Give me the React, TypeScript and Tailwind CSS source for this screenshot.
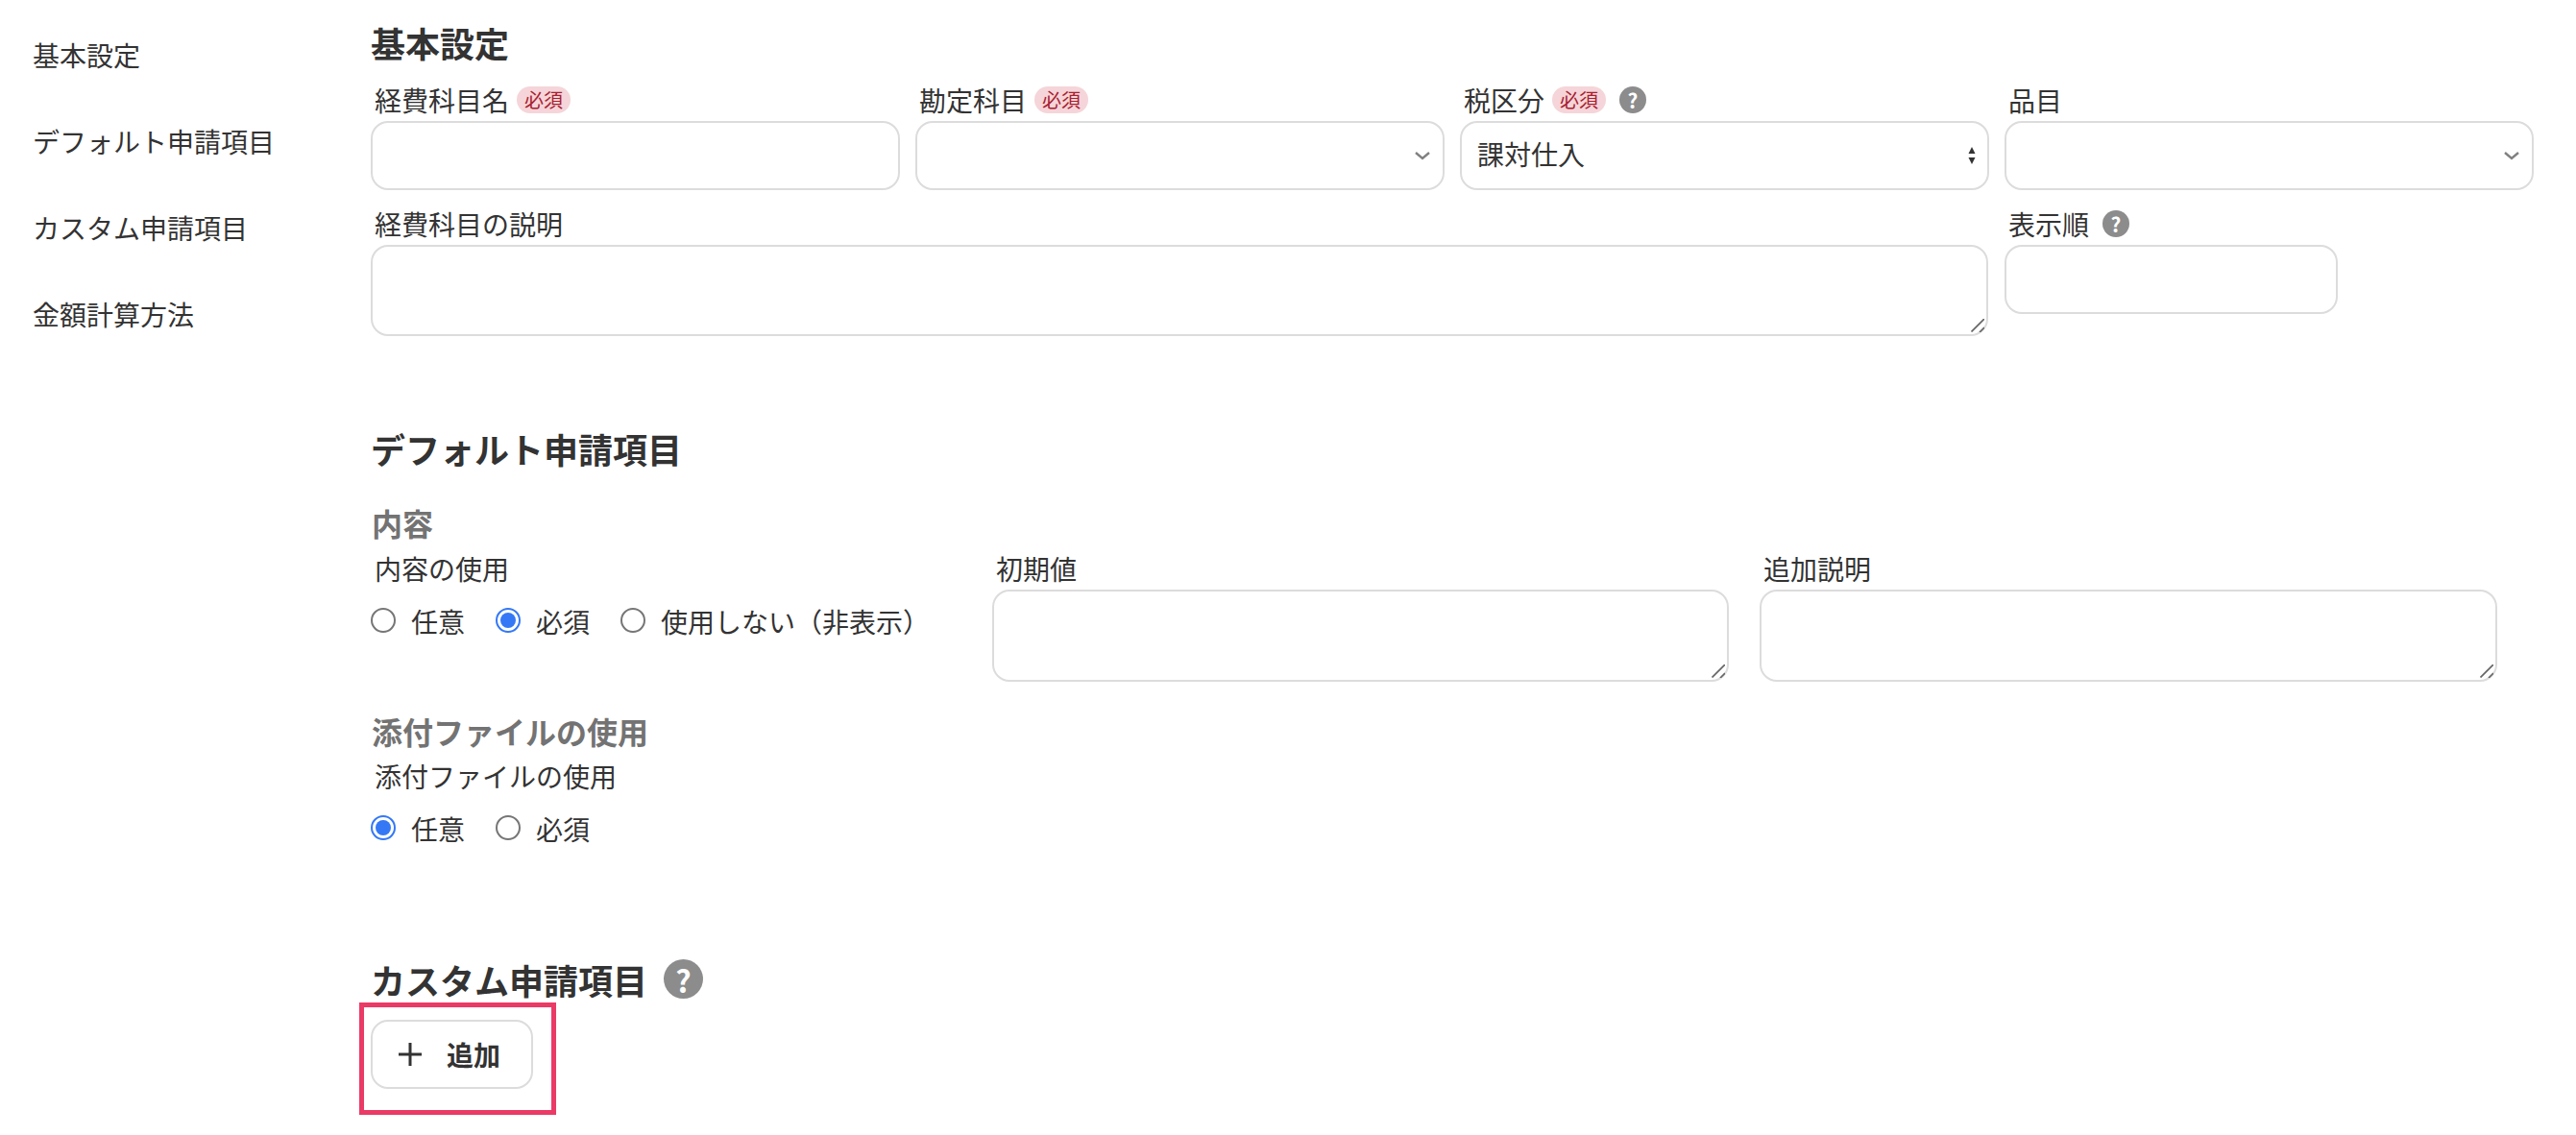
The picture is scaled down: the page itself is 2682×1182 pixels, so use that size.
import React from "react";

const font = { fontFamily: '"Noto Sans CJK JP", "Noto Sans", sans-serif' };

function Help({ big }: { big?: boolean }) {
  return (
    <span
      className={
        big
          ? "flex h-[41px] w-[41px] items-center justify-center rounded-full bg-[#8c8c8c] text-[32px] font-bold leading-none text-white"
          : "flex h-[28px] w-[28px] items-center justify-center rounded-full bg-[#8c8c8c] text-[21px] font-bold leading-none text-white"
      }
    >
      ?
    </span>
  );
}

function Required() {
  return (
    <span className="flex h-[28px] w-[56px] items-center justify-center rounded-[14px] bg-[#f5d5d9] text-[20px] leading-none text-[#a8202f]">
      必須
    </span>
  );
}

function Label({ children, className = "" }: { children: React.ReactNode; className?: string }) {
  return (
    <div className={`flex h-[42px] items-center gap-[8px] pl-[4px] pb-[2px] text-[28px] leading-none text-[#333333] ${className}`}>
      {children}
    </div>
  );
}

function Chevron() {
  return (
    <svg className="absolute right-[14px] top-[30px] h-[12px] w-[18px] text-[#808080]" viewBox="0 0 18 12" fill="none" stroke="currentColor" strokeWidth="2.4">
      <path d="M2 3 L9 9 L16 3" />
    </svg>
  );
}

function UpDown() {
  return (
    <svg className="absolute right-[13px] top-[25px] h-[22px] w-[10px] text-[#333333]" viewBox="0 0 10 22" fill="currentColor">
      <path d="M5 2 L8.5 9 H1.5 Z" />
      <path d="M5 20 L8.5 13 H1.5 Z" />
    </svg>
  );
}

const box = "h-[72px] w-full rounded-[18px] border-2 border-[#dcdcdc] bg-white";
const area = "block w-full resize-none rounded-[18px] border-2 border-[#dcdcdc] bg-white outline-none";

function Area({ className }: { className: string }) {
  return (
    <div className="relative">
      <textarea className={`${area} ${className}`} />
      <svg className="pointer-events-none absolute bottom-[4px] right-[4px] h-[14px] w-[14px] text-[#666666]" viewBox="0 0 14 14" fill="none" stroke="currentColor" strokeWidth="1.7">
        <path d="M0.5 13.5 L14 0 M9 14 L14 9" />
      </svg>
    </div>
  );
}

function Radio({ label, checked, className = "" }: { label: string; checked?: boolean; className?: string }) {
  return (
    <span className={`flex items-center gap-[16px] text-[28px] leading-none text-[#333333] ${className}`}>
      <span
        className={
          checked
            ? "flex h-[26px] w-[26px] items-center justify-center rounded-full border-2 border-[#3478f6] bg-white"
            : "h-[26px] w-[26px] rounded-full border-2 border-[#767676] bg-white"
        }
      >
        {checked && <span className="h-[16px] w-[16px] rounded-full bg-[#3478f6]" />}
      </span>
      <span className="pt-[2px]">{label}</span>
    </span>
  );
}

function H2({ children }: { children: React.ReactNode }) {
  return <h2 className="text-[36px] font-bold leading-none text-[#333333]">{children}</h2>;
}

function H3({ children }: { children: React.ReactNode }) {
  return <h3 className="pl-[1px] text-[32px] font-bold leading-none text-[#737373]">{children}</h3>;
}

export default function App() {
  return (
    <div className="flex h-[1182px] w-[2682px] overflow-hidden bg-white" style={font}>
      <nav className="flex w-[386px] shrink-0 flex-col gap-[62px] pl-[34px] pt-[43px] text-[28px] leading-[28px] text-[#333333]">
        <div>基本設定</div>
        <div>デフォルト申請項目</div>
        <div>カスタム申請項目</div>
        <div>金額計算方法</div>
      </nav>

      <main className="relative w-[2251px] pt-[26px]">
        <H2>基本設定</H2>

        <div className="mt-[22px] grid grid-cols-[551px_551px_551px_551px] gap-x-[16px]">
          <div>
            <Label>経費科目名<Required /></Label>
            <input className={`${box} outline-none`} />
          </div>
          <div>
            <Label>勘定科目<Required /></Label>
            <div className="relative">
              <div className={box} />
              <Chevron />
            </div>
          </div>
          <div>
            <Label>税区分<Required /><span className="ml-[6px]"><Help /></span></Label>
            <div className="relative">
              <div className={`${box} flex items-center pb-[5px] pl-[16px] text-[28px] leading-none text-[#333333]`}>課対仕入</div>
              <UpDown />
            </div>
          </div>
          <div>
            <Label>品目</Label>
            <div className="relative">
              <div className={box} />
              <Chevron />
            </div>
          </div>
        </div>

        <div className="mt-[15px] grid grid-cols-[1684px_551px] gap-x-[17px]">
          <div>
            <Label>経費科目の説明</Label>
            <Area className="h-[95px]" />
          </div>
          <div>
            <Label>表示順<span className="ml-[6px]"><Help /></span></Label>
            <input className={`${box} !w-[347px] outline-none`} />
          </div>
        </div>

        <div className="mt-[99px]">
          <H2>デフォルト申請項目</H2>
        </div>

        <div className="mt-[43px]">
          <H3>内容</H3>
        </div>

        <div className="mt-[12px] flex">
          <div className="w-[647px]">
            <Label>内容の使用</Label>
            <div className="mt-[17px] flex items-center gap-[32px]">
              <Radio label="任意" />
              <Radio label="必須" checked />
              <Radio label="使用しない（非表示）" />
            </div>
          </div>
          <div className="w-[767px]">
            <Label>初期値</Label>
            <Area className="h-[96px]" />
          </div>
          <div className="ml-[32px] w-[768px]">
            <Label>追加説明</Label>
            <Area className="h-[96px]" />
          </div>
        </div>

        <div className="mt-[35px]">
          <H3>添付ファイルの使用</H3>
        </div>
        <div className="mt-[11px]">
          <Label>添付ファイルの使用</Label>
          <div className="mt-[17px] flex items-center gap-[32px]">
            <Radio label="任意" checked />
            <Radio label="必須" />
          </div>
        </div>

        <div className="mt-[122px] flex items-center gap-[17px]">
          <H2>カスタム申請項目</H2>
          <Help big />
        </div>

        <button className="mt-[22px] flex h-[72px] w-[169px] items-center gap-[25px] rounded-[18px] border-2 border-[#dcdcdc] bg-white pl-[26px] text-[28px] font-bold leading-none text-[#333333]">
          <svg className="h-[26px] w-[26px]" viewBox="0 0 26 26" fill="none" stroke="currentColor" strokeWidth="3">
            <path d="M13 1 V25 M1 13 H25" />
          </svg>
          追加
        </button>

        <div className="absolute left-[-12px] top-[1044px] h-[117px] w-[205px] border-[5px] border-[#ea3a66]" />
      </main>
    </div>
  );
}
